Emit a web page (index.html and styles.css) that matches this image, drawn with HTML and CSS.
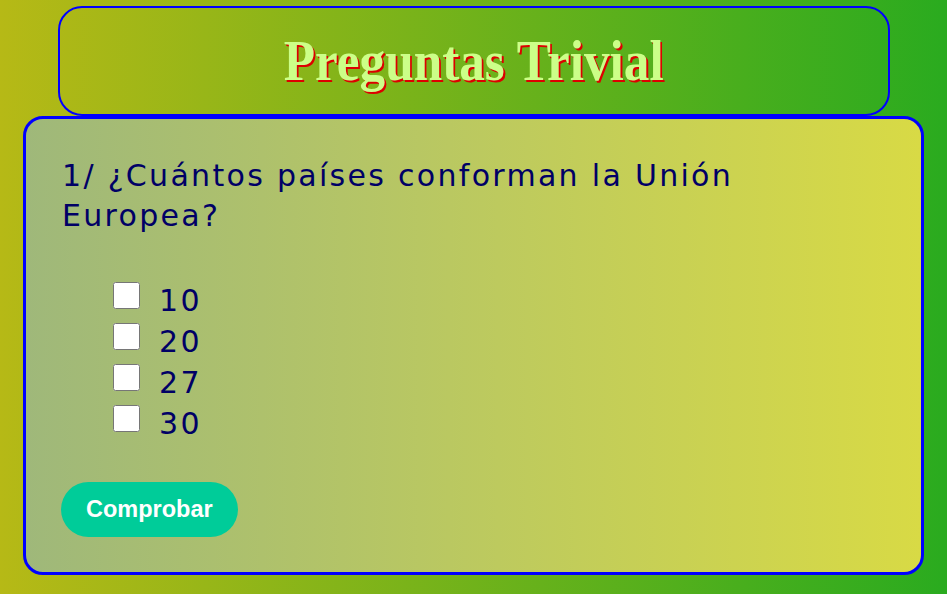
FILE: index.html
```html
<!DOCTYPE html>
<html lang="es">
<head>
<meta charset="utf-8">
<title>Preguntas Trivial</title>
<link rel="stylesheet" href="styles.css">
</head>
<body>
<header class="cabecera">
  <h1 class="titulo">Preguntas Trivial</h1>
</header>
<main class="tarjeta">
  <p class="pregunta">1/ ¿Cuántos países conforman la Unión Europea?</p>
  <ul class="opciones">
    <li><label><input type="checkbox" class="check"><span>10</span></label></li>
    <li><label><input type="checkbox" class="check"><span>20</span></label></li>
    <li><label><input type="checkbox" class="check"><span>27</span></label></li>
    <li><label><input type="checkbox" class="check"><span>30</span></label></li>
  </ul>
  <button class="boton">Comprobar</button>
</main>
</body>
</html>
```
FILE: styles.css
```css
html, body {
  margin: 0;
  padding: 0;
}
body {
  width: 947px;
  height: 594px;
  overflow: hidden;
  background: linear-gradient(to right, #b6b916, #2aab1f);
  display: flex;
  flex-direction: column;
  align-items: center;
}
.cabecera {
  box-sizing: border-box;
  width: 832px;
  height: 110px;
  margin-top: 6px;
  border: 2px solid #0000ff;
  border-radius: 24px;
  display: flex;
  justify-content: center;
  align-items: center;
}
.titulo {
  margin: 0;
  font-family: "Liberation Serif", serif;
  font-weight: bold;
  font-size: 56px;
  line-height: 64px;
  color: #ccff88;
  text-shadow: 2px 2px 0 #dd0000;
  transform: scaleX(0.915);
}
.tarjeta {
  box-sizing: border-box;
  width: 901px;
  height: 459px;
  border: 3px solid #0000ff;
  border-radius: 20px;
  background: linear-gradient(to right, #9fb87a, #d8da45);
  padding: 37px 35px 0 35px;
  font-family: "DejaVu Sans", sans-serif;
  color: #000066;
}
.pregunta {
  margin: 0;
  font-size: 30px;
  line-height: 40px;
  letter-spacing: 2.3px;
  padding: 0 120px 0 1px;
}
.opciones {
  list-style: none;
  margin: 44px 0 0 0;
  padding: 0 0 0 52px;
  font-size: 30px;
  line-height: 41px;
  letter-spacing: 2.3px;
}
.opciones li {
  height: 41px;
}
.check {
  width: 27px;
  height: 27px;
  margin: 0 19px 0 0;
  vertical-align: 2px;
}
.boton {
  display: block;
  margin-top: 38px;
  height: 55px;
  padding: 0 25px;
  border: none;
  border-radius: 28px;
  background: #00cc99;
  color: #ffffff;
  font-family: "Liberation Sans", Arial, sans-serif;
  font-weight: bold;
  font-size: 23.5px;
}
```
